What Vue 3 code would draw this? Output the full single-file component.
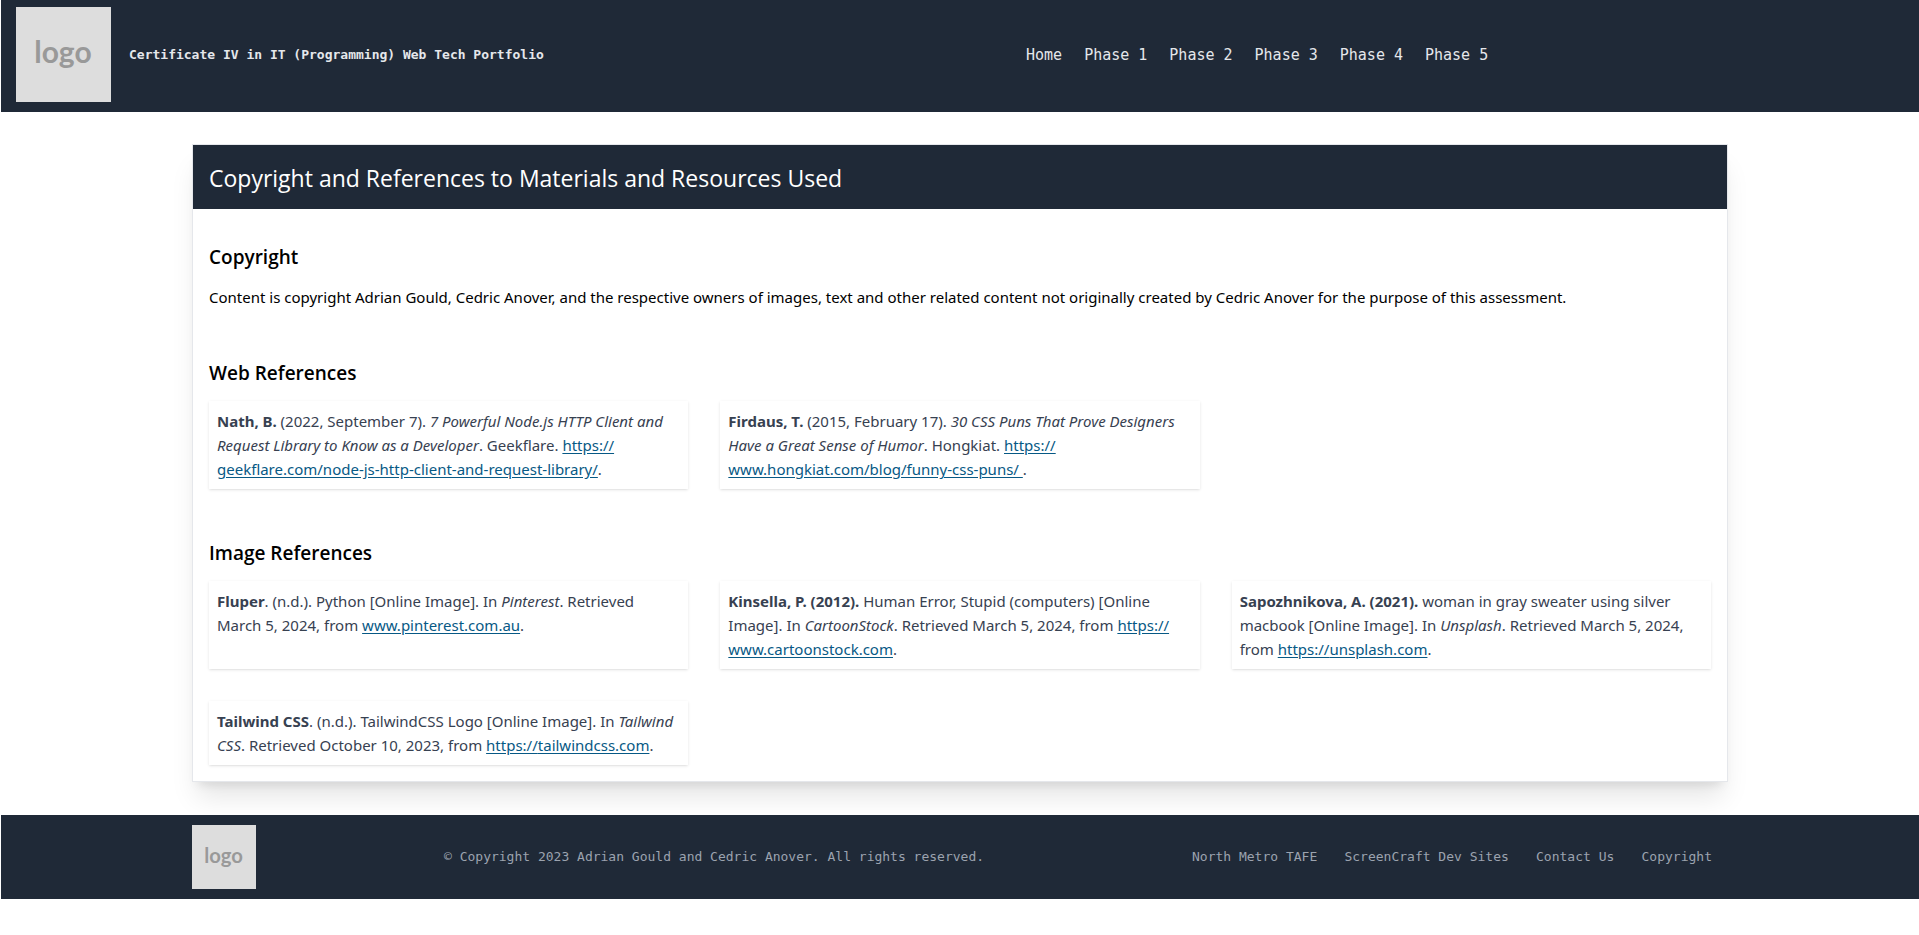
<script setup>
const phases = ['Home', 'Phase 1', 'Phase 2', 'Phase 3', 'Phase 4', 'Phase 5']
const footerLinks = ['North Metro TAFE', 'ScreenCraft Dev Sites', 'Contact Us', 'Copyright']

const sections = [
  {
    title: 'Web References',
    items: [
      { author: 'Nath, B.', before: ' (2022, September 7). ', source: '7 Powerful Node.js HTTP Client and Request Library to Know as a Developer', after: '. Geekflare. ', scheme: 'https://', address: 'geekflare.com/node-js-http-client-and-request-library/' },
      { author: 'Firdaus, T.', before: ' (2015, February 17). ', source: '30 CSS Puns That Prove Designers Have a Great Sense of Humor', after: '. Hongkiat. ', scheme: 'https://', address: 'www.hongkiat.com/blog/funny-css-puns/\u00a0' }
    ]
  },
  {
    title: 'Image References',
    items: [
      { author: 'Fluper', before: '. (n.d.). Python [Online Image]. In ', source: 'Pinterest', after: '. Retrieved March\u00a05, 2024, from ', scheme: '', address: 'www.pinterest.com.au' },
      { author: 'Kinsella, P. (2012).', before: ' Human Error, Stupid (computers) [Online Image]. In ', source: 'CartoonStock', after: '. Retrieved March\u00a05, 2024, from ', scheme: 'https://', address: 'www.cartoonstock.com' },
      { author: 'Sapozhnikova, A. (2021).', before: ' woman in gray sweater using silver macbook [Online Image]. In ', source: 'Unsplash', after: '. Retrieved March\u00a05, 2024, from ', scheme: 'https://', address: 'unsplash.com' },
      { author: 'Tailwind CSS', before: '. (n.d.). TailwindCSS Logo [Online Image]. In ', source: 'Tailwind CSS', after: '. Retrieved October 10, 2023, from ', scheme: 'https://', address: 'tailwindcss.com' }
    ]
  }
]
</script>

<template>
  <div class="page">
    <header class="site-header">
      <div class="brand">
        <svg class="brand-logo" viewBox="0 0 95 95" role="img" aria-label="logo">
          <rect width="95" height="95" fill="#ddd" />
          <text class="logo-text" x="47" y="56" text-anchor="middle">logo</text>
        </svg>
        <span class="brand-name">Certificate IV in IT (Programming) Web Tech Portfolio</span>
      </div>
      <nav class="main-nav" aria-label="Main">
        <a v-for="item in phases" :key="item" href="#">{{ item }}</a>
      </nav>
    </header>

    <main class="content">
      <article class="panel">
        <h1 class="panel-title">Copyright and References to Materials and Resources Used</h1>
        <div class="panel-body">
          <section>
            <h2>Copyright</h2>
            <p>Content is copyright Adrian Gould, Cedric Anover, and the respective owners of images, text and other related content not originally created by Cedric Anover for the purpose of this assessment.</p>
          </section>
          <section v-for="section in sections" :key="section.title">
            <h2>{{ section.title }}</h2>
            <div class="references">
              <p v-for="item in section.items" :key="item.author" class="reference"><strong>{{ item.author }}</strong>{{ item.before }}<em>{{ item.source }}</em>{{ item.after }}<a href="#">{{ item.scheme }}<wbr><span class="address">{{ item.address }}</span></a>.</p>
            </div>
          </section>
        </div>
      </article>
    </main>

    <footer class="site-footer">
      <div class="footer-inner">
        <svg class="footer-logo" viewBox="0 0 95 95" role="img" aria-label="logo">
          <rect width="95" height="95" fill="#ddd" />
          <text class="logo-text" x="47" y="56" text-anchor="middle">logo</text>
        </svg>
        <p>© Copyright 2023 Adrian Gould and Cedric Anover. All rights reserved.</p>
        <nav class="footer-nav" aria-label="Footer">
          <a v-for="item in footerLinks" :key="item" href="#">{{ item }}</a>
        </nav>
      </div>
    </footer>
  </div>
</template>

<style>
body {
  margin: 0;
  background: #fff;
}
</style>

<style scoped>
.page {
  padding-left: 1px;
  font-family: "Noto Sans", "Open Sans", sans-serif;
  font-size: 15px;
  line-height: 24px;
  color: #000;
}
h1, h2, p {
  margin: 0;
}
h1, h2 {
  font-family: "Open Sans", "Noto Sans", sans-serif;
}
.logo-text {
  font-family: Lato, sans-serif;
  font-size: 30px;
  font-weight: 700;
  fill: #999;
}
.site-header {
  display: grid;
  grid-template-columns: 1025fr 893fr;
  align-items: center;
  padding: 7px 0 10px;
  background: #1f2937;
  font-family: "DejaVu Sans Mono", monospace;
  color: #e5e7eb;
}
.brand {
  display: flex;
  align-items: center;
  gap: 18px;
  padding-left: 15px;
}
.brand-logo {
  display: block;
  width: 95px;
  height: 95px;
  flex: none;
}
.brand-name {
  font-size: 13px;
  font-weight: 700;
}
.main-nav {
  display: flex;
  gap: 22px;
}
.main-nav a {
  font-size: 15px;
  color: inherit;
  text-decoration: none;
}
.content {
  max-width: 1536px;
  margin: 0 auto;
  padding: 32px 0 33px;
}
.panel {
  border: 1px solid #e5e7eb;
  background: #fff;
  box-shadow: 0 20px 25px -5px rgba(0, 0, 0, 0.1), 0 8px 10px -6px rgba(0, 0, 0, 0.1);
}
.panel-title {
  padding: 16px 16px 14px;
  background: #1f2937;
  color: #fff;
  font-size: 23px;
  font-weight: 400;
  line-height: 34px;
}
.panel-body {
  display: flex;
  flex-direction: column;
  gap: 48px;
  padding: 32px 16px 16px;
}
h2 {
  margin-bottom: 12px;
  font-size: 19px;
  font-weight: 600;
  line-height: 32px;
}
.references {
  display: grid;
  grid-template-columns: repeat(3, minmax(0, 1fr));
  gap: 32px;
}
.reference {
  padding: 8px;
  color: #374151;
  box-shadow: 0 1px 3px 0 rgba(0, 0, 0, 0.1), 0 1px 2px -1px rgba(0, 0, 0, 0.1);
}
.reference a {
  color: #075985;
  text-decoration: underline;
  text-underline-offset: 2px;
}
.address {
  white-space: nowrap;
}
.site-footer {
  position: relative;
  background: #1f2937;
  color: #9ca3af;
  font-family: "DejaVu Sans Mono", monospace;
  font-size: 13px;
}
.footer-inner {
  display: grid;
  grid-template-columns: 252fr 748fr 520fr;
  align-items: center;
  box-sizing: border-box;
  max-width: 1536px;
  margin: 0 auto;
  padding: 10px 16px 10px 0;
}
.footer-logo {
  display: block;
  width: 64px;
  height: 64px;
}
.footer-nav {
  display: flex;
  justify-content: space-between;
}
.footer-nav a {
  color: inherit;
  text-decoration: none;
}
</style>
